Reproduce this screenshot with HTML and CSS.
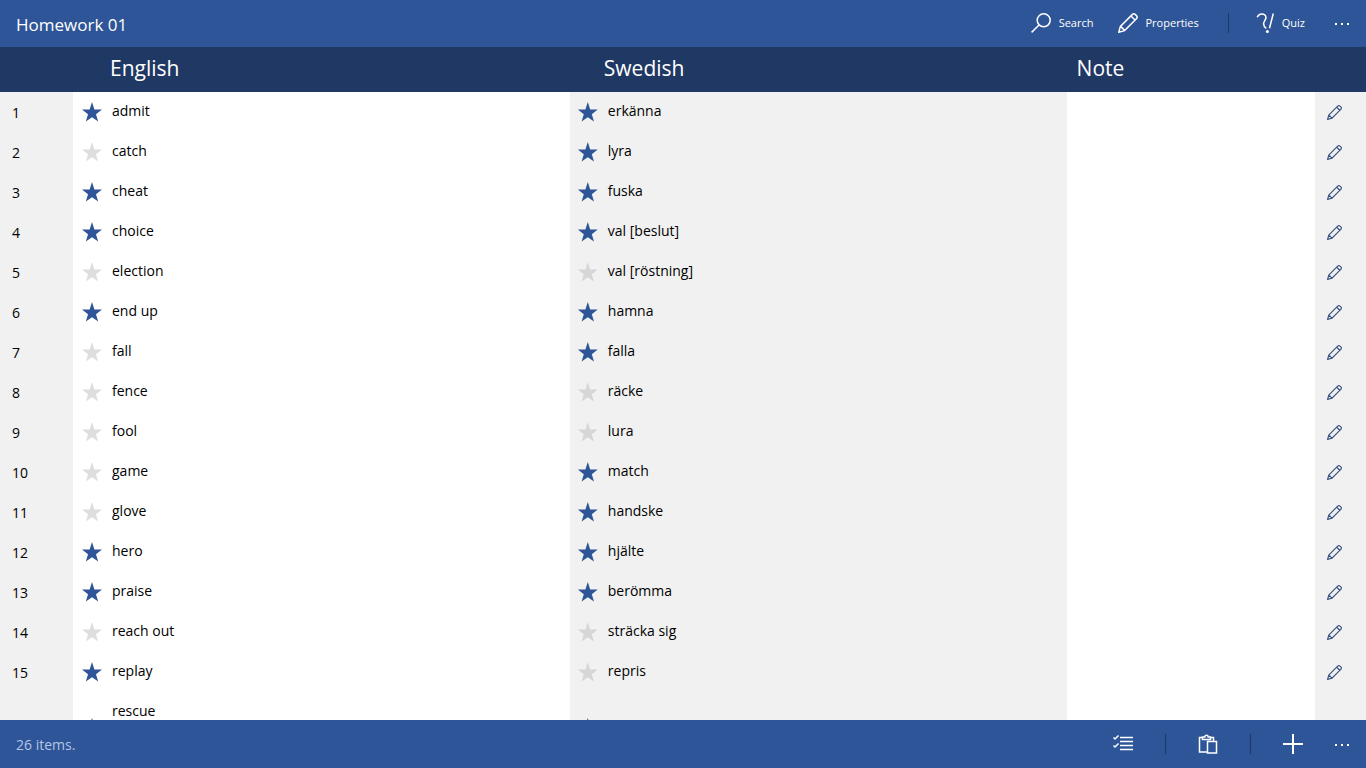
FILE: index.html
```html
<!DOCTYPE html>
<html lang="en">
<head>
<meta charset="utf-8">
<meta name="viewport" content="width=device-width, initial-scale=1">
<title>Homework 01</title>
<link rel="stylesheet" href="styles.css">
</head>
<body>
<svg class="sprite" aria-hidden="true">
  <symbol id="pencil" viewBox="0 0 20 20">
    <path d="M.8 19.200l1.600-5.800L14.200 1.600a2.300 2.300 0 0 1 3.200 0l1 1a2.300 2.300 0 0 1 0 3.200L6.600 17.600zM13 3l4 4M2.600 13.400l4 4"/>
  </symbol>
</svg>
<div class="app">
  <header class="bar">
    <h1 class="title">Homework 01</h1>
    <div class="actions">
      <button class="action" type="button">
        <svg class="icon" viewBox="0 0 20 20" aria-hidden="true"><circle cx="12.700" cy="7.300" r="6.500"/><path d="M8 12L.6 19.400"/></svg>
        <span>Search</span>
      </button>
      <button class="action" type="button">
        <svg class="icon" aria-hidden="true"><use href="#pencil"/></svg>
        <span>Properties</span>
      </button>
      <span class="divider"></span>
      <button class="action" type="button">
        <svg class="icon" viewBox="0 0 20 20" aria-hidden="true"><path d="M3.200 4.200C4 2 5.800.9 7.800.9c2.600 0 4.300 1.700 4.100 4C11.700 7.200 9.600 8.200 9.600 10.800c0 2.200 1.200 3.600 2.700 4.700M19.300.5l-3.800 14.800"/><circle class="dot" cx="13.400" cy="18.400" r="1.500"/></svg>
        <span>Quiz</span>
      </button>
      <button class="more" type="button" aria-label="More"><i></i><i></i><i></i></button>
    </div>
  </header>
  <main class="list">
    <table class="words">
      <thead>
        <tr><th></th><th class="h-english">English</th><th class="h-swedish">Swedish</th><th class="h-note">Note</th><th></th></tr>
      </thead>
      <tbody>
        <tr><td class="num">1</td><td class="word"><input type="checkbox" aria-label="admit" checked><span>admit</span></td><td class="word alt"><input type="checkbox" aria-label="erkänna" checked><span>erkänna</span></td><td></td><td class="edit"><button type="button" aria-label="Edit"><svg><use href="#pencil"/></svg></button></td></tr>
        <tr><td class="num">2</td><td class="word"><input type="checkbox" aria-label="catch"><span>catch</span></td><td class="word alt"><input type="checkbox" aria-label="lyra" checked><span>lyra</span></td><td></td><td class="edit"><button type="button" aria-label="Edit"><svg><use href="#pencil"/></svg></button></td></tr>
        <tr><td class="num">3</td><td class="word"><input type="checkbox" aria-label="cheat" checked><span>cheat</span></td><td class="word alt"><input type="checkbox" aria-label="fuska" checked><span>fuska</span></td><td></td><td class="edit"><button type="button" aria-label="Edit"><svg><use href="#pencil"/></svg></button></td></tr>
        <tr><td class="num">4</td><td class="word"><input type="checkbox" aria-label="choice" checked><span>choice</span></td><td class="word alt"><input type="checkbox" aria-label="val [beslut]" checked><span>val [beslut]</span></td><td></td><td class="edit"><button type="button" aria-label="Edit"><svg><use href="#pencil"/></svg></button></td></tr>
        <tr><td class="num">5</td><td class="word"><input type="checkbox" aria-label="election"><span>election</span></td><td class="word alt"><input type="checkbox" aria-label="val [röstning]"><span>val [röstning]</span></td><td></td><td class="edit"><button type="button" aria-label="Edit"><svg><use href="#pencil"/></svg></button></td></tr>
        <tr><td class="num">6</td><td class="word"><input type="checkbox" aria-label="end up" checked><span>end up</span></td><td class="word alt"><input type="checkbox" aria-label="hamna" checked><span>hamna</span></td><td></td><td class="edit"><button type="button" aria-label="Edit"><svg><use href="#pencil"/></svg></button></td></tr>
        <tr><td class="num">7</td><td class="word"><input type="checkbox" aria-label="fall"><span>fall</span></td><td class="word alt"><input type="checkbox" aria-label="falla" checked><span>falla</span></td><td></td><td class="edit"><button type="button" aria-label="Edit"><svg><use href="#pencil"/></svg></button></td></tr>
        <tr><td class="num">8</td><td class="word"><input type="checkbox" aria-label="fence"><span>fence</span></td><td class="word alt"><input type="checkbox" aria-label="räcke"><span>räcke</span></td><td></td><td class="edit"><button type="button" aria-label="Edit"><svg><use href="#pencil"/></svg></button></td></tr>
        <tr><td class="num">9</td><td class="word"><input type="checkbox" aria-label="fool"><span>fool</span></td><td class="word alt"><input type="checkbox" aria-label="lura"><span>lura</span></td><td></td><td class="edit"><button type="button" aria-label="Edit"><svg><use href="#pencil"/></svg></button></td></tr>
        <tr><td class="num">10</td><td class="word"><input type="checkbox" aria-label="game"><span>game</span></td><td class="word alt"><input type="checkbox" aria-label="match" checked><span>match</span></td><td></td><td class="edit"><button type="button" aria-label="Edit"><svg><use href="#pencil"/></svg></button></td></tr>
        <tr><td class="num">11</td><td class="word"><input type="checkbox" aria-label="glove"><span>glove</span></td><td class="word alt"><input type="checkbox" aria-label="handske" checked><span>handske</span></td><td></td><td class="edit"><button type="button" aria-label="Edit"><svg><use href="#pencil"/></svg></button></td></tr>
        <tr><td class="num">12</td><td class="word"><input type="checkbox" aria-label="hero" checked><span>hero</span></td><td class="word alt"><input type="checkbox" aria-label="hjälte" checked><span>hjälte</span></td><td></td><td class="edit"><button type="button" aria-label="Edit"><svg><use href="#pencil"/></svg></button></td></tr>
        <tr><td class="num">13</td><td class="word"><input type="checkbox" aria-label="praise" checked><span>praise</span></td><td class="word alt"><input type="checkbox" aria-label="berömma" checked><span>berömma</span></td><td></td><td class="edit"><button type="button" aria-label="Edit"><svg><use href="#pencil"/></svg></button></td></tr>
        <tr><td class="num">14</td><td class="word"><input type="checkbox" aria-label="reach out"><span>reach out</span></td><td class="word alt"><input type="checkbox" aria-label="sträcka sig"><span>sträcka sig</span></td><td></td><td class="edit"><button type="button" aria-label="Edit"><svg><use href="#pencil"/></svg></button></td></tr>
        <tr><td class="num">15</td><td class="word"><input type="checkbox" aria-label="replay" checked><span>replay</span></td><td class="word alt"><input type="checkbox" aria-label="repris"><span>repris</span></td><td></td><td class="edit"><button type="button" aria-label="Edit"><svg><use href="#pencil"/></svg></button></td></tr>
        <tr class="tall"><td class="num"></td><td class="word"><input type="checkbox" aria-label="rescue" checked><span>rescue</span></td><td class="word alt"><input type="checkbox" aria-label="rescue, Swedish" checked></td><td></td><td class="edit"></td></tr>
      </tbody>
    </table>
  </main>
  <footer class="bar">
    <p class="count">26 items.</p>
    <div class="actions tools">
      <button class="tool" type="button" aria-label="Select">
        <svg class="icon" viewBox="0 0 20 20" aria-hidden="true"><path d="M7 3.500h13M7 7.500h13M7 11.500h13M7 15.500h13"/><path d="M.5 3.500L2 5l3.500-3.500M.5 11.500L2 13l3.500-3.500"/></svg>
      </button>
      <span class="divider"></span>
      <button class="tool" type="button" aria-label="Paste">
        <svg class="icon" viewBox="0 0 20 20" aria-hidden="true"><path d="M9 18H1.500V3.500h3M12.500 3.500h3V7M4.500 3v2.500h8V3h-2.300a1.700 1.700 0 0 0-3.400 0zM9.500 7.500h9v11.500h-9z"/></svg>
      </button>
      <span class="divider"></span>
      <button class="tool" type="button" aria-label="Add">
        <svg class="icon" viewBox="0 0 20 20" aria-hidden="true"><path d="M10 0v20M0 10h20" stroke-width="2"/></svg>
      </button>
      <button class="more" type="button" aria-label="More"><i></i><i></i><i></i></button>
    </div>
  </footer>
</div>
</body>
</html>
```
FILE: styles.css
```css
* { box-sizing: border-box; }
body {
  margin: 0;
  color: #000;
  font: 14px/20px "Open Sans", "Noto Sans", sans-serif;
}
button {
  margin: 0;
  padding: 0;
  border: 0;
  background: none;
  color: inherit;
  font: inherit;
}
svg {
  fill: none;
  stroke: currentColor;
  stroke-width: 1.5;
}
.sprite {
  position: absolute;
  width: 0;
  height: 0;
}
.app {
  display: flex;
  flex-direction: column;
  height: 100vh;
}
.bar {
  display: flex;
  flex: none;
  align-items: center;
  justify-content: space-between;
  min-height: 47px;
  padding: 0 17px 0 16px;
  background: #2e5597;
  color: #fff;
}
footer.bar { min-height: 48px; }
.title {
  margin: 0;
  padding-top: 2px;
  font-size: 17px;
  font-weight: 400;
  line-height: 24px;
}
.count {
  margin: 0;
  padding-top: 2px;
  color: #b4c6e4;
}
.actions {
  display: flex;
  align-items: center;
  gap: 24px;
}
header .actions { padding-bottom: 2px; }
.action {
  display: flex;
  align-items: center;
  gap: 8px;
  font-size: 11px;
}
.icon {
  display: block;
  width: 20px;
  height: 20px;
}
.dot {
  fill: currentColor;
  stroke: none;
}
.divider {
  width: 1px;
  height: 20px;
  margin: 0 1px 0 5px;
  background: #1b3866;
}
.more {
  display: flex;
  gap: 4px;
  padding-top: 2px;
  margin-left: 6px;
}
.more i {
  width: 2px;
  height: 2px;
  background: #fff;
}
.tools { gap: 32px; }
.tools .divider {
  margin: 0;
  align-self: flex-start;
}
.tools .more { margin-left: 0; }
.list {
  flex: 1;
  min-height: 0;
  overflow: hidden;
}
.words,
.words thead,
.words tbody { display: block; }
.words tr {
  display: grid;
  grid-template-columns: 73px 2fr 2fr 1fr 51px;
  min-height: 40px;
}
.words th {
  padding: 6px 0 9px;
  color: #fff;
  font-size: 21px;
  font-weight: 400;
  line-height: 30px;
  text-align: left;
}
.words thead { background: #203864; }
.words th.h-english { padding-left: 37px; }
.words th.h-swedish { padding-left: 34px; }
.words th.h-note { padding-left: 10px; }
.words td {
  display: flex;
  align-items: center;
  padding: 0;
}
.words td.num {
  padding: 2px 0 0 12px;
  background: #f1f1f1;
}
.words td.word {
  gap: 10px;
  padding-left: 9px;
}
.words td.alt {
  padding-left: 8px;
  background: #f1f1f1;
}
.word span {
  align-self: flex-start;
  padding-top: 9px;
}
.word input {
  flex: none;
  width: 20px;
  height: 20px;
  margin: 0;
  appearance: none;
  background: #dedede;
  clip-path: polygon(50% 0, 62% 37%, 100% 38%, 70% 61%, 81% 98%, 50% 76%, 19% 98%, 30% 61%, 0 38%, 38% 37%);
}
.alt input { background: #d6d6d6; }
.word input:checked { background: #2e5597; }
.words td.edit {
  padding-left: 12px;
  background: #f1f1f1;
  color: #35507f;
}
.edit svg {
  display: block;
  width: 15px;
  height: 15px;
}
.words tr.tall { min-height: 72px; }
```
